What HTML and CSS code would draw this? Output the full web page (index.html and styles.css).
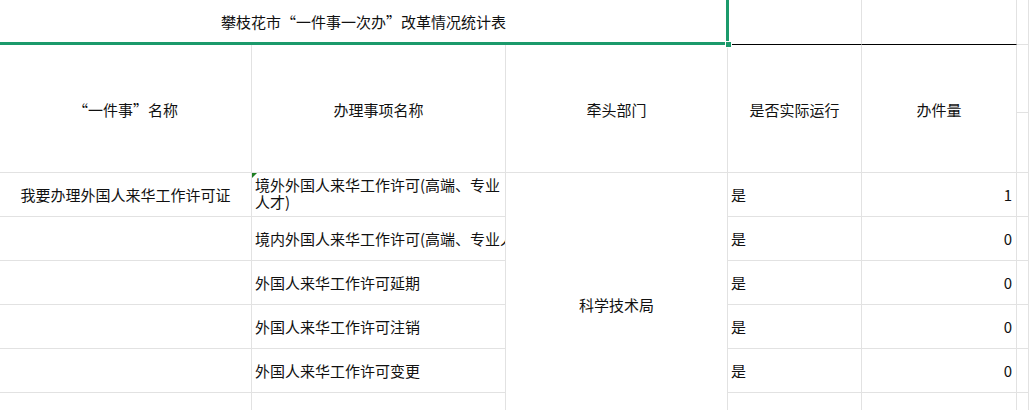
FILE: index.html
```html
<!DOCTYPE html>
<html lang="zh-CN">
<head>
<meta charset="utf-8">
<title>攀枝花市“一件事一次办”改革情况统计表</title>
<link rel="stylesheet" href="styles.css">
</head>
<body>
<div class="sheet">
  <div class="cell title">攀枝花市“一件事一次办”改革情况统计表<span class="sel"></span><span class="handle"></span></div>
  <div class="cell dark"></div>
  <div class="cell dark"></div>
  <div class="cell"></div>

  <div class="cell head hspan">“一件事”名称</div>
  <div class="cell head hspan">办理事项名称</div>
  <div class="cell head hspan">牵头部门</div>
  <div class="cell head hspan">是否实际运行</div>
  <div class="cell head hspan">办件量</div>
  <div class="cell"></div>
  <div class="cell"></div>

  <div class="cell center">我要办理外国人来华工作许可证</div>
  <div class="cell left wrap flag">境外外国人来华工作许可(高端、专业人才)</div>
  <div class="cell center dept">科学技术局</div>
  <div class="cell left">是</div>
  <div class="cell right">1</div>
  <div class="cell"></div>

  <div class="cell"></div>
  <div class="cell left clip">境内外国人来华工作许可(高端、专业人才)</div>
  <div class="cell left">是</div>
  <div class="cell right">0</div>
  <div class="cell"></div>

  <div class="cell"></div>
  <div class="cell left">外国人来华工作许可延期</div>
  <div class="cell left">是</div>
  <div class="cell right">0</div>
  <div class="cell"></div>

  <div class="cell"></div>
  <div class="cell left">外国人来华工作许可注销</div>
  <div class="cell left">是</div>
  <div class="cell right">0</div>
  <div class="cell"></div>

  <div class="cell"></div>
  <div class="cell left">外国人来华工作许可变更</div>
  <div class="cell left">是</div>
  <div class="cell right">0</div>
  <div class="cell"></div>

  <div class="cell"></div>
  <div class="cell"></div>
  <div class="cell"></div>
  <div class="cell"></div>
  <div class="cell"></div>
</div>
</body>
</html>
```

FILE: styles.css
```css
html, body {
  margin: 0;
  padding: 0;
  background: #fff;
  overflow: hidden;
}

body {
  width: 1029px;
  height: 410px;
  font-family: "Noto Sans CJK SC", "Noto Sans", sans-serif;
  font-size: 15px;
  color: #111;
}

.sheet {
  width: 1029px;
  height: 410px;
  overflow: hidden;
  display: grid;
  grid-template-columns: 252px 254px 222px 134px 155px 1fr;
  grid-template-rows: 45px 68px 60px repeat(6, 44px);
}

.cell {
  box-sizing: border-box;
  border-right: 1px solid #e2e2e2;
  border-bottom: 1px solid #e2e2e2;
  display: flex;
  align-items: center;
  min-width: 0;
  overflow: hidden;
  white-space: nowrap;
  line-height: 17px;
}

.title {
  grid-column: 1 / 4;
  justify-content: center;
  position: relative;
  overflow: visible;
  border-right-color: transparent;
  padding-bottom: 2px;
}

.sel {
  position: absolute;
  left: -3px;
  top: -3px;
  right: -2px;
  bottom: -1px;
  border: 3px solid #1b9a6b;
  pointer-events: none;
  z-index: 2;
}

.handle {
  position: absolute;
  left: 725px;
  top: 41px;
  width: 5px;
  height: 5px;
  background: #1b9a6b;
  border: 1px solid #fff;
  z-index: 3;
}

.dark {
  border-bottom-color: #000;
}

.head {
  justify-content: center;
  padding-top: 1px;
}

.hspan {
  grid-row: 2 / 4;
}

.center {
  justify-content: center;
}

.left {
  justify-content: flex-start;
  padding-left: 3px;
}

.right {
  justify-content: flex-end;
  padding-right: 4px;
}

.wrap {
  white-space: normal;
  padding-bottom: 4px;
}

.clip {
  text-overflow: clip;
}

.flag {
  position: relative;
}

.flag::before {
  content: "";
  position: absolute;
  left: 0;
  top: 0;
  width: 0;
  height: 0;
  border-top: 5px solid #1e7e22;
  border-right: 5px solid transparent;
}

.dept {
  grid-column: 3;
  grid-row: 4 / 10;
  padding-bottom: 1px;
}
```
